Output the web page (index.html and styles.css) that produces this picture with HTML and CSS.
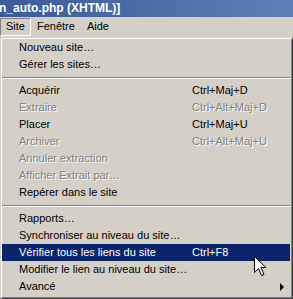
FILE: index.html
```html
<!DOCTYPE html>
<html lang="fr">
<head>
    <meta charset="UTF-8">
    <title>Menu Site</title>
    <link rel="stylesheet" href="styles.css">
</head>
<body>
    <!-- Barre de titre -->
    <div class="title-bar">n_auto.php (XHTML)]</div>

    <!-- Barre de menus -->
    <div class="menu-bar">
        <span class="menu-title active">Site</span>
        <span class="menu-title">Fenêtre</span>
        <span class="menu-title">Aide</span>
    </div>

    <!-- Menu déroulant -->
    <div class="menu">
        <div class="item"><span class="label">Nouveau site…</span></div>
        <div class="item"><span class="label">Gérer les sites…</span></div>
        <div class="separator"></div>
        <div class="item"><span class="label">Acquérir</span><span class="key">Ctrl+Maj+D</span></div>
        <div class="item disabled"><span class="label">Extraire</span><span class="key">Ctrl+Alt+Maj+D</span></div>
        <div class="item"><span class="label">Placer</span><span class="key">Ctrl+Maj+U</span></div>
        <div class="item disabled"><span class="label">Archiver</span><span class="key">Ctrl+Alt+Maj+U</span></div>
        <div class="item disabled"><span class="label">Annuler extraction</span></div>
        <div class="item disabled"><span class="label">Afficher Extrait par…</span></div>
        <div class="item"><span class="label">Repérer dans le site</span></div>
        <div class="separator"></div>
        <div class="item"><span class="label">Rapports…</span></div>
        <div class="item"><span class="label">Synchroniser au niveau du site…</span></div>
        <div class="item selected"><span class="label">Vérifier tous les liens du site</span><span class="key">Ctrl+F8</span></div>
        <div class="item"><span class="label">Modifier le lien au niveau du site…</span></div>
        <div class="item submenu"><span class="label">Avancé</span><span class="arrow"></span></div>
    </div>

    <!-- Pointeur de la souris -->
    <svg class="cursor" width="13" height="21" viewBox="0 0 13 21">
        <path d="M0.5 0.5 L0.5 16.5 L4.5 12.5 L7.5 19.5 L10 18.5 L7 11.5 L12 11.5 Z" fill="#fff" stroke="#000" stroke-width="1"/>
    </svg>
</body>
</html>
```

FILE: styles.css
```css
/* Общие стили */
body {
    margin: 0;
    width: 293px;
    height: 299px;
    overflow: hidden;
    position: relative;
    background: #d4d0c8;
    font-family: 'Liberation Sans', Arial, sans-serif;
    font-size: 11px;
    color: #000;
}

.title-bar {
    height: 17px;
    line-height: 17px;
    background: linear-gradient(90deg, #3c5b98, #5f7fb7);
    color: #fff;
    font-size: 12px;
    font-weight: bold;
    white-space: nowrap;
    text-indent: -1px;
}

.menu-bar {
    height: 20px;
    display: flex;
    align-items: center;
}

.menu-title {
    padding: 1px 5px 2px 5px;
    line-height: 13px;
    border: 1px solid transparent;
}

.menu-title.active {
    border-color: #808080 #fff #fff #808080;
}

.menu {
    height: 262px;
    box-sizing: border-box;
    padding: 1px 2px 1px 1px;
    border: 1px solid;
    border-color: #d4d0c8 #404040 #404040 #d4d0c8;
    box-shadow: inset 1px 1px 0 #fff, inset -1px -1px 0 #808080;
}

.item {
    height: 17px;
    line-height: 17px;
    display: flex;
    padding-left: 17px;
    white-space: nowrap;
    position: relative;
}

.item .label {
    width: 173px;
    flex: none;
}

.item.disabled {
    color: #808080;
    text-shadow: 1px 1px 0 #fff;
}

.item.selected {
    background: #0a246a;
    color: #fff;
}

.separator {
    height: 9px;
    display: flex;
    align-items: center;
}

.separator::before {
    content: "";
    flex: 1;
    height: 1px;
    border-bottom: 1px solid #fff;
    background: #808080;
}

.arrow {
    position: absolute;
    right: 6px;
    top: 5px;
    width: 0;
    height: 0;
    border-top: 4px solid transparent;
    border-bottom: 4px solid transparent;
    border-left: 4px solid #000;
}

.cursor {
    position: absolute;
    left: 254px;
    top: 256px;
}
```
